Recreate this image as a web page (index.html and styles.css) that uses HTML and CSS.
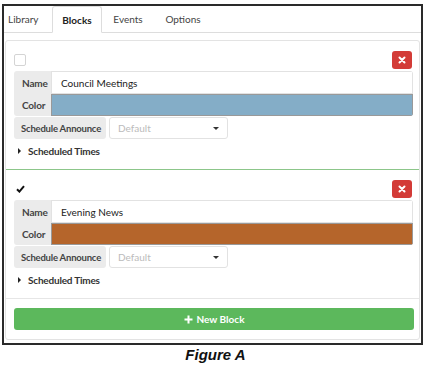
FILE: index.html
```html
<!DOCTYPE html>
<html lang="en">
<head>
    <meta charset="UTF-8">
    <meta name="viewport" content="width=device-width, initial-scale=1.0">
    <title>Blocks</title>
    <link rel="stylesheet" href="styles.css">
</head>
<body>
    <div class="frame">
        <ul class="tabs">
            <li class="tab tab-library">Library</li>
            <li class="tab tab-blocks active">Blocks</li>
            <li class="tab tab-events">Events</li>
            <li class="tab tab-options">Options</li>
        </ul>

        <div class="panel">
            <div class="block">
                <div class="block-head">
                    <span class="check"></span>
                    <button class="remove"><svg width="8" height="8" viewBox="0 0 8 8"><path d="M1.5 1.5L6.5 6.5M6.5 1.5L1.5 6.5" stroke="#fff" stroke-width="2" stroke-linecap="round"/></svg></button>
                </div>
                <div class="field-group">
                    <div class="field"><span class="addon">Name</span><div class="input">Council Meetings</div></div>
                    <div class="field"><span class="addon">Color</span><div class="input swatch swatch-blue"></div></div>
                </div>
                <div class="announce">
                    <span class="addon addon-round">Schedule Announce</span>
                    <div class="select">Default<span class="caret"></span></div>
                </div>
                <div class="times"><span class="arrow"></span>Scheduled Times</div>
            </div>

            <div class="block block-last">
                <div class="block-head">
                    <span class="check checked"><svg width="9" height="8" viewBox="0 0 9 8"><path d="M1 4.2L3.4 6.6L8 1.2" fill="none" stroke="#111" stroke-width="2"/></svg></span>
                    <button class="remove"><svg width="8" height="8" viewBox="0 0 8 8"><path d="M1.5 1.5L6.5 6.5M6.5 1.5L1.5 6.5" stroke="#fff" stroke-width="2" stroke-linecap="round"/></svg></button>
                </div>
                <div class="field-group">
                    <div class="field"><span class="addon">Name</span><div class="input">Evening News</div></div>
                    <div class="field"><span class="addon">Color</span><div class="input swatch swatch-orange"></div></div>
                </div>
                <div class="announce">
                    <span class="addon addon-round">Schedule Announce</span>
                    <div class="select">Default<span class="caret"></span></div>
                </div>
                <div class="times"><span class="arrow"></span>Scheduled Times</div>
            </div>

            <div class="footer">
                <button class="new-block"><svg width="9" height="9" viewBox="0 0 9 9"><path d="M4.5 0.5V8.5M0.5 4.5H8.5" stroke="#fff" stroke-width="2"/></svg>New Block</button>
            </div>
        </div>
    </div>

    <p class="caption">Figure A</p>
</body>
</html>
```

FILE: styles.css
```css
body {
    margin: 0;
    background-color: #fff;
    color: #333;
    font-family: Lato, "Open Sans", sans-serif;
    font-size: 10px;
}

.frame {
    margin: 4px 0 0 2px;
    width: 417px;
    height: 337px;
    border: 2px solid #2a2a2a;
    display: flex;
    flex-direction: column;
}

/* tabs */
.tabs {
    list-style: none;
    margin: 0;
    padding: 0;
    display: flex;
    height: 26px;
    border-bottom: 1px solid #ddd;
}
.tab {
    display: flex;
    align-items: center;
    justify-content: center;
    height: 26px;
    color: #444;
}
.tab-library { width: 44px; justify-content: flex-start; padding-left: 4px; }
.tab-blocks { width: 50px; }
.tab-events { width: 52px; }
.tab-options { width: 58px; }
.tab.active {
    font-weight: bold;
    color: #222;
    background: #fff;
    border: 1px solid #ddd;
    border-bottom: 1px solid #fff;
    border-radius: 3px 3px 0 0;
    margin-bottom: -1px;
    box-sizing: border-box;
    height: 27px;
}

/* panel */
.panel {
    margin: 7px 1px 3px 1px;
    flex: 1;
    border: 1px solid #e3e3e3;
    border-radius: 3px;
    display: flex;
    flex-direction: column;
}
.block {
    padding: 10px 6px 8px 8px;
    border-bottom: 1px solid #8cc68a;
}
.block-last {
    padding-top: 10px;
    border-bottom: 1px solid #e6e6e6;
}
.block-head {
    display: flex;
    justify-content: space-between;
    align-items: center;
    height: 18px;
    margin-bottom: 2px;
}
.check {
    width: 10px;
    height: 10px;
    border: 1px solid #d4d4d4;
    border-radius: 2px;
    display: flex;
    align-items: center;
    justify-content: center;
}
.check.checked {
    border-color: transparent;
}
.remove {
    width: 20px;
    height: 18px;
    margin-right: 1px;
    border: none;
    border-radius: 3px;
    background-color: #d33b37;
    display: flex;
    align-items: center;
    justify-content: center;
    padding: 0;
}

.field-group {
    border-radius: 3px;
    overflow: hidden;
}
.field {
    display: flex;
    height: 22px;
}
.field:first-child {
    height: 23px;
}
.addon {
    width: 37px;
    box-sizing: border-box;
    padding-left: 8px;
    background-color: #ebebeb;
    font-weight: bold;
    color: #444;
    display: flex;
    align-items: center;
    white-space: nowrap;
    letter-spacing: -0.2px;
}
.input {
    flex: 1;
    border: 1px solid #e2e2e2;
    background: #fff;
    display: flex;
    align-items: center;
    padding-left: 9px;
    color: #222;
}
.swatch { border-color: #999; }
.swatch-blue { background-color: #84adc7; }
.swatch-orange { background-color: #b5652b; }

.announce {
    display: flex;
    margin-top: 1px;
    height: 22px;
}
.addon-round {
    width: 92px;
    padding-left: 7px;
    border-radius: 3px;
    font-size: 9.5px;
}
.select {
    margin-left: 3px;
    width: 119px;
    box-sizing: border-box;
    border: 1px solid #e2e2e2;
    border-radius: 3px;
    padding-left: 8px;
    color: #bbb;
    display: flex;
    align-items: center;
    position: relative;
}
.caret {
    position: absolute;
    right: 8px;
    top: 9px;
    border-left: 3px solid transparent;
    border-right: 3px solid transparent;
    border-top: 3px solid #333;
}

.times {
    display: flex;
    align-items: center;
    height: 20px;
    margin-top: 2px;
    font-weight: bold;
    color: #333;
    letter-spacing: -0.2px;
}
.arrow {
    margin: 0 7px 0 4px;
    border-top: 3px solid transparent;
    border-bottom: 3px solid transparent;
    border-left: 3px solid #222;
}

.footer {
    padding: 9px 5px 0 8px;
}
.new-block {
    width: 100%;
    height: 22px;
    border: none;
    border-radius: 3px;
    background-color: #5cb85c;
    color: #fff;
    font-family: Lato, "Open Sans", sans-serif;
    font-size: 10px;
    font-weight: bold;
    display: flex;
    align-items: center;
    justify-content: center;
    gap: 4px;
}

.caption {
    margin: 1px 0 0;
    text-align: center;
    font-family: "Liberation Sans", Arial, sans-serif;
    font-weight: bold;
    font-style: italic;
    font-size: 15px;
    color: #111;
}
```
